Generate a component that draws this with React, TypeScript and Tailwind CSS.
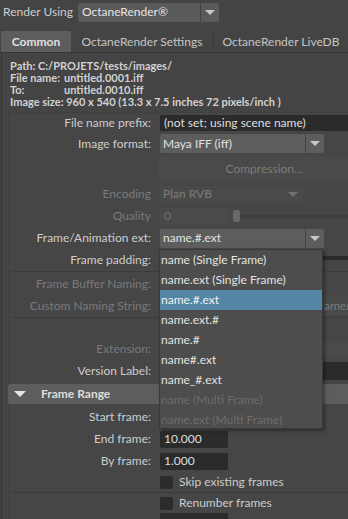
import React from "react";

function Arrow({ dim = false }: { dim?: boolean }) {
  return (
    <svg width="10" height="5" viewBox="0 0 10 5">
      <path d="M0 0 L10 0 L5 5 Z" fill={dim ? "#6f6f6f" : "#c8c8c8"} />
    </svg>
  );
}

function Label({ children, dim = false }: { children: React.ReactNode; dim?: boolean }) {
  return (
    <div className={["w-[142px] shrink-0 text-right whitespace-nowrap", dim ? "text-[#7a7a7a]" : "text-[#cdcdcd]"].join(" ")}>
      {children}
    </div>
  );
}

function Row({ h, label, dim, children }: { h: string; label?: string; dim?: boolean; children?: React.ReactNode }) {
  return (
    <div className={["flex items-center", h].join(" ")}>
      <Label dim={dim}>{label}</Label>
      <div className="ml-[9px] flex flex-1 items-center min-w-0">{children}</div>
    </div>
  );
}

function Dropdown({ value, w }: { value: string; w: string }) {
  return (
    <div className={["flex h-[19px] rounded-[2px] bg-[#5d5d5d] shrink-0", w].join(" ")}>
      <div className="flex-1 pl-[3px] flex items-center text-[#e2e2e2] whitespace-nowrap">{value}</div>
      <div className="w-[19px] border-l border-[#444] flex items-center justify-center">
        <Arrow />
      </div>
    </div>
  );
}

function Field({ value, w = "w-[68px]" }: { value: string; w?: string }) {
  return (
    <div className={["h-[17px] bg-[#2b2b2b] rounded-[2px] pl-[4px] flex items-center text-[#dedede] shrink-0", w].join(" ")}>
      {value}
    </div>
  );
}

function Check({ label }: { label: string }) {
  return (
    <div className="flex items-center">
      <div className="w-[13px] h-[13px] bg-[#2b2b2b] rounded-[2px]" />
      <span className="ml-[6px] text-[#cdcdcd] whitespace-nowrap">{label}</span>
    </div>
  );
}

const menuItems: { t: string; sel?: boolean; off?: boolean }[] = [
  { t: "name (Single Frame)" },
  { t: "name.ext (Single Frame)" },
  { t: "name.#.ext", sel: true },
  { t: "name.ext.#" },
  { t: "name.#" },
  { t: "name#.ext" },
  { t: "name_#.ext" },
  { t: "name (Multi Frame)", off: true },
  { t: "name.ext (Multi Frame)", off: true },
];

export default function App() {
  return (
    <div className="relative w-[348px] h-[519px] overflow-hidden bg-[#444444] font-[Lato,sans-serif] text-[12px] leading-none text-[#cdcdcd]">
      {/* Render using */}
      <div className="flex items-center h-[24px] pl-[3px]">
        <span className="whitespace-nowrap">Render Using</span>
        <div className="ml-[5px] flex h-[19px] w-[141px] rounded-[2px] bg-[#5a5a5a]">
          <div className="flex-1 pl-[4px] flex items-center text-[#e4e4e4]">OctaneRender®</div>
          <div className="w-[19px] border-l border-[#444] flex items-center justify-center">
            <Arrow />
          </div>
        </div>
      </div>

      {/* Tabs */}
      <div className="mt-[7px] flex h-[21px] pl-[1px]">
        <div className="w-[70px] bg-[#5d5d5d] rounded-t-[2px] flex items-center justify-center font-bold text-[#e0e0e0]">Common</div>
        <div className="w-[143px] border-r border-[#3a3a3a] flex items-center justify-center text-[#c4c4c4] whitespace-nowrap">
          OctaneRender Settings
        </div>
        <div className="w-[134px] flex items-center justify-center text-[#c4c4c4] whitespace-nowrap">OctaneRender LiveDB</div>
      </div>

      {/* Content */}
      <div className="ml-[1px] border-t border-l border-[#363636] h-[500px]">
        <div className="pt-[7px] pl-[8px] text-[11px] leading-[12px] font-bold text-[#d2d2d2] whitespace-nowrap">
          <div>Path: C:/PROJETS/tests/images/</div>
          <div className="flex">
            <span className="w-[54px]">File name:</span>
            <span>untitled.0001.iff</span>
          </div>
          <div className="flex">
            <span className="w-[54px]">To:</span>
            <span>untitled.0010.iff</span>
          </div>
          <div>Image size: 960 x 540 (13.3 x 7.5 inches 72 pixels/inch )</div>
        </div>

        <div className="mt-[4px] ml-[6px] border-t border-l border-[#404040] bg-[#464646]">
          <Row h="h-[19px]" label="File name prefix:">
            <div className="h-[16px] flex-1 bg-[#2b2b2b] pl-[4px] flex items-center text-[#dedede] whitespace-nowrap">
              (not set; using scene name)
            </div>
          </Row>
          <Row h="h-[23px]" label="Image format:">
            <Dropdown value="Maya IFF (iff)" w="w-[164px]" />
          </Row>
          <div className="mt-[2px] h-[24px] flex">
            <div className="w-[150px] shrink-0" />
            <div className="w-[210px] shrink-0 bg-[#4a4a4a] rounded-[2px] flex items-center justify-center text-[#7c7c7c]">
              Compression...
            </div>
          </div>
          <Row h="h-[22px] mt-[2px]" label="Encoding" dim>
            <div className="flex h-[17px] w-[143px] bg-[#4a4a4a] rounded-[2px]">
              <div className="flex-1 pl-[3px] flex items-center text-[#7c7c7c]">Plan RVB</div>
              <div className="w-[20px] flex items-center justify-center">
                <Arrow dim />
              </div>
            </div>
          </Row>
          <Row h="h-[22px]" label="Quality" dim>
            <div className="h-[17px] w-[68px] bg-[#4a4a4a] rounded-[2px] pl-[4px] flex items-center text-[#6f6f6f]">0</div>
            <div className="ml-[5px] w-[7px] h-[12px] bg-[#6a6a6a] rounded-[2px] shrink-0" />
            <div className="flex-1 h-[3px] bg-[#3e3e3e]" />
          </Row>
          <Row h="h-[22px]" label="Frame/Animation ext:">
            <Dropdown value="name.#.ext" w="w-[164px]" />
          </Row>
          <Row h="h-[22px]" label="Frame padding:">
            <Field value="" />
            <div className="ml-[5px] w-[7px] h-[12px] bg-[#6a6a6a] rounded-[2px] shrink-0" />
            <div className="flex-1 h-[4px] bg-[#2b2b2b] mb-[4px]" />
          </Row>
          <div className="h-px bg-[#3c3c3c] ml-[2px]" />
          <Row h="h-[22px] mt-px" label="Frame Buffer Naming:" dim>
            <div className="h-[17px] w-[164px] bg-[#4a4a4a] rounded-[2px]" />
          </Row>
          <Row h="h-[22px]" label="Custom Naming String:" dim>
            <div className="h-[18px] flex-1 bg-[#4a4a4a] flex items-center overflow-hidden whitespace-nowrap text-[#7a7a7a]">
              <span className="pl-[164px]">amera&gt;</span>
            </div>
          </Row>
          <div className="h-px bg-[#3c3c3c] ml-[2px]" />
          <div className="h-[20px]" />
          <Row h="h-[22px]" label="Extension:" dim>
            <div className="h-[17px] flex-1 bg-[#4a4a4a]" />
          </Row>
          <Row h="h-[22px]" label="Version Label:">
            <div className="h-[18px] flex-1 bg-[#2b2b2b]" />
          </Row>

          {/* Frame Range */}
          <div className="mt-[2px] -ml-[1px] h-[20px] bg-[#5d5d5d] rounded-l-[2px] flex items-center">
            <svg width="12" height="6" viewBox="0 0 12 6" className="ml-[6px]">
              <path d="M0 0 L12 0 L6 6 Z" fill="#e6e6e6" />
            </svg>
            <span className="ml-[15px] font-bold text-[#dedede]">Frame Range</span>
          </div>
          <Row h="h-[22px] mt-[2px]" label="Start frame:">
            <Field value="" />
          </Row>
          <Row h="h-[22px]" label="End frame:">
            <Field value="10.000" />
          </Row>
          <Row h="h-[22px]" label="By frame:">
            <Field value="1.000" />
          </Row>
          <Row h="h-[20px]">
            <Check label="Skip existing frames" />
          </Row>
          <div className="h-px bg-[#3c3c3c] ml-[2px]" />
          <Row h="h-[20px]">
            <Check label="Renumber frames" />
          </Row>
          <Row h="h-[22px] items-start">
            <Field value="" />
          </Row>
        </div>
      </div>

      {/* Open menu */}
      <div className="absolute left-[159px] top-[249px] w-[164px] h-[180px] bg-[#4d4d4d] border border-[#3a3a3a] shadow-[2px_2px_3px_rgba(0,0,0,0.35)]">
        {menuItems.map((m) => (
          <div
            key={m.t}
            className={[
              "h-[20px] pl-[1px] flex items-center whitespace-nowrap",
              m.sel ? "bg-[#5285a6] text-[#f2f2f2]" : m.off ? "text-[#6c6c6c]" : "text-[#e2e2e2]",
            ].join(" ")}
          >
            {m.t}
          </div>
        ))}
      </div>
    </div>
  );
}
